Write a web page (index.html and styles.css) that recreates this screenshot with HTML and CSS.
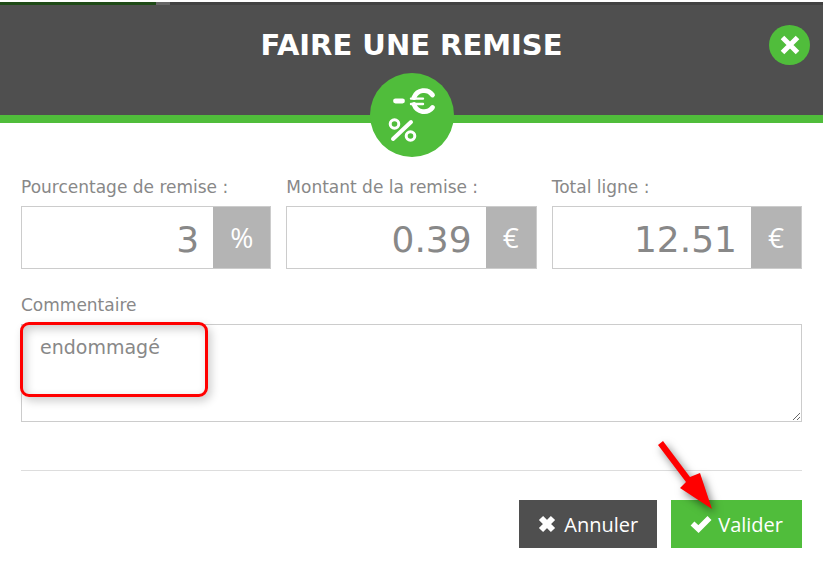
FILE: index.html
```
<!DOCTYPE html>
<html lang="fr">

<head>
    <meta charset="UTF-8">
    <meta name="viewport" content="width=device-width, initial-scale=1.0">
    <title>Faire une remise</title>
    <link rel="stylesheet" href="styles.css">
</head>

<body>
    <div class="topbar">
        <span class="topbar-progress"></span>
        <span class="topbar-gap"></span>
    </div>

    <header class="header">
        <h1 class="title">FAIRE UNE REMISE</h1>
        <button type="button" class="close" aria-label="Fermer">
            <svg width="20" height="20" viewBox="0 0 20 20">
                <path d="M2.5 2.5L17.5 17.5M17.5 2.5L2.5 17.5" stroke="#fff" stroke-width="5" />
            </svg>
        </button>
        <div class="badge">
            <svg width="84" height="84" viewBox="0 0 84 84" fill="none" stroke="#fff" stroke-linecap="round">
                <path d="M25.5 28H32.5" stroke-width="4.8" />
                <path d="M62.5 22A10.8 11.2 0 0 0 44 24.5M44 31.5A10.8 11.2 0 0 0 62.5 34.5" stroke-width="4.8" />
                <path d="M41 25.6H53M41 31H53" stroke-width="2.4" />
                <circle cx="24.5" cy="51" r="4.3" stroke-width="3" />
                <circle cx="40.5" cy="63" r="4.3" stroke-width="3" />
                <path d="M41 49L23 66" stroke-width="4" />
            </svg>
        </div>
    </header>

    <form class="form">
        <div class="fields">
            <div class="field">
                <label for="pourcentage">Pourcentage de remise :</label>
                <div class="group">
                    <input type="text" id="pourcentage" value="3">
                    <span class="addon">%</span>
                </div>
            </div>
            <div class="field">
                <label for="montant">Montant de la remise :</label>
                <div class="group">
                    <input type="text" id="montant" value="0.39">
                    <span class="addon">€</span>
                </div>
            </div>
            <div class="field">
                <label for="total">Total ligne :</label>
                <div class="group">
                    <input type="text" id="total" value="12.51">
                    <span class="addon">€</span>
                </div>
            </div>
        </div>

        <div class="field comment">
            <label for="commentaire">Commentaire</label>
            <textarea id="commentaire">endommagé</textarea>
            <span class="highlight"></span>
        </div>

        <div class="actions">
            <button type="button" class="btn btn-cancel">
                <svg width="18" height="18" viewBox="0 0 18 18">
                    <path d="M3 3L15 15M15 3L3 15" stroke="#fff" stroke-width="6" />
                </svg>
                Annuler
            </button>
            <button type="submit" class="btn btn-ok">
                <svg width="22" height="18" viewBox="0 0 22 18">
                    <path d="M2.5 8.5L8.5 14L19.5 3" fill="none" stroke="#fff" stroke-width="5.6" />
                </svg>
                Valider
            </button>
            <svg class="arrow" width="70" height="80" viewBox="0 0 70 80">
                <path d="M7 10L12 6L39 42L49 38L61 74L29 53L35 47Z" fill="#f00" />
            </svg>
        </div>
    </form>
</body>

</html>
```

FILE: styles.css
```
* {
    box-sizing: border-box;
}

body {
    margin: 0;
    padding-top: 2px;
    background-color: #fff;
    font-family: Verdana, "DejaVu Sans", sans-serif;
    color: #888;
}

.topbar {
    display: flex;
    height: 3px;
    background-color: #424242;
}

.topbar-progress {
    width: 19%;
    background-color: #1f4a17;
}

.topbar-gap {
    width: 14px;
    background-color: #666;
}

.header {
    position: relative;
    height: 118px;
    padding-top: 22px;
    background-color: #4f4f4f;
    border-bottom: 8px solid #50bd3b;
    text-align: center;
}

.title {
    margin: 0;
    font-size: 29px;
    line-height: 36px;
    color: #fff;
}

.close {
    position: absolute;
    top: 20px;
    right: 13px;
    display: flex;
    align-items: center;
    justify-content: center;
    width: 41px;
    height: 40px;
    padding: 0;
    border: none;
    border-radius: 50%;
    background-color: #50bd3b;
    cursor: pointer;
}

.badge {
    position: absolute;
    bottom: -42px;
    left: 50%;
    width: 84px;
    height: 84px;
    margin-left: -42px;
    border-radius: 50%;
    background-color: #50bd3b;
}

.form {
    padding: 52px 21px 20px;
}

.fields {
    display: grid;
    grid-template-columns: repeat(3, minmax(0, 1fr));
    gap: 15px;
    margin-bottom: 24px;
}

.field {
    position: relative;
    display: flex;
    flex-direction: column;
}

label {
    margin-bottom: 7px;
    font-size: 17px;
    line-height: 24px;
}

.group {
    display: flex;
    height: 63px;
    border: 1px solid #ccc;
}

.group input {
    flex: 1;
    min-width: 0;
    padding: 3px 14px 0;
    border: none;
    font-family: inherit;
    font-size: 36px;
    text-align: right;
    color: #888;
}

.addon {
    padding: 0 17px;
    background-color: #b4b4b4;
    font-family: "Open Sans", sans-serif;
    font-size: 28px;
    line-height: 61px;
    color: #fff;
}

textarea {
    height: 98px;
    padding: 10px 18px;
    border: 1px solid #ccc;
    font-family: inherit;
    font-size: 19px;
    line-height: 24px;
    color: #888;
}

/* cadre rouge autour du commentaire */
.highlight {
    position: absolute;
    top: 29px;
    left: -1px;
    width: 188px;
    height: 75px;
    border: 3px solid #f00;
    border-radius: 9px;
    box-shadow: 3px 4px 10px rgba(0, 0, 0, 0.2), inset 3px 4px 10px rgba(0, 0, 0, 0.2);
    pointer-events: none;
}

.actions {
    position: relative;
    display: flex;
    justify-content: flex-end;
    gap: 14px;
    margin-top: 48px;
    padding-top: 29px;
    border-top: 1px solid #ddd;
}

.btn {
    display: flex;
    align-items: center;
    gap: 8px;
    height: 48px;
    padding: 0 19px;
    border: none;
    font-family: "Open Sans", sans-serif;
    font-size: 20px;
    color: #fff;
    cursor: pointer;
}

.btn-cancel {
    background-color: #4f4f4f;
}

.btn-ok {
    gap: 6px;
    background-color: #50bd3b;
}

.arrow {
    position: absolute;
    top: -36px;
    right: 81px;
    overflow: visible;
    filter: drop-shadow(3px 4px 4px rgba(0, 0, 0, 0.5));
    pointer-events: none;
}
```
